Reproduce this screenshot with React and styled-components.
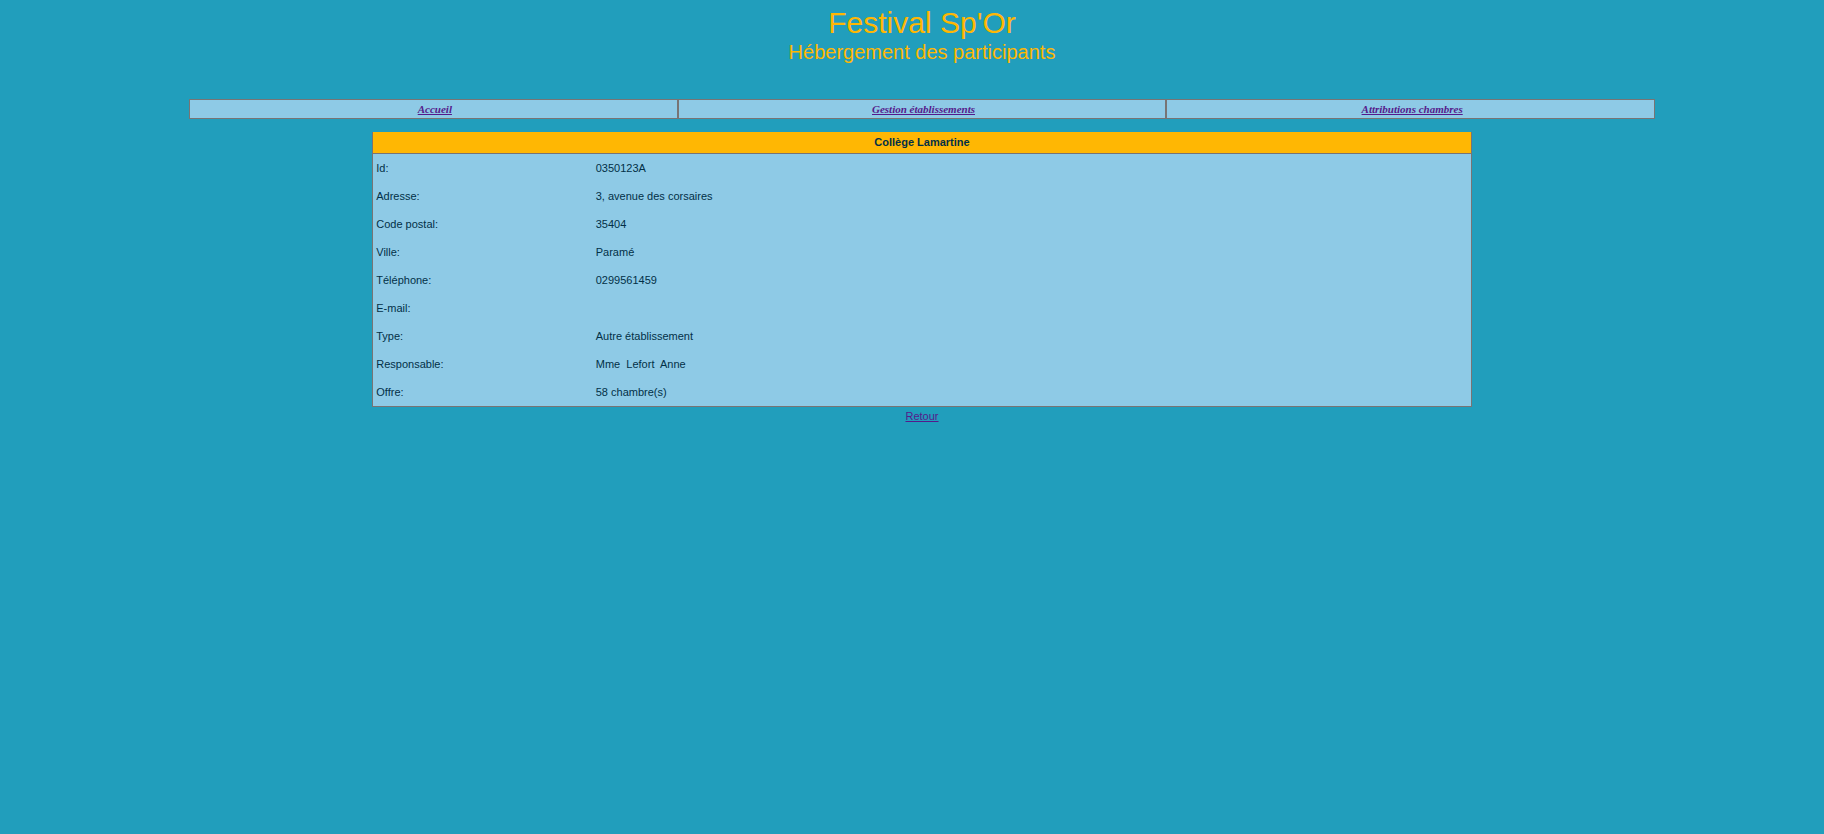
import React from 'react';
import styled, { createGlobalStyle } from 'styled-components';

const GlobalStyle = createGlobalStyle`
  body {
    margin: 0;
    background: #219ebc;
    color: #023047;
    font-family: "Liberation Sans", Arial, sans-serif;
    font-size: 11px;
    line-height: 12px;
  }
`;

const Page = styled.div`
  display: flex;
  flex-direction: column;
  align-items: center;
  padding: 5px 169px 20px 189px;
`;

const Header = styled.header`
  text-align: center;
  color: #ffb703;
  margin-bottom: 35px;
`;

const Title = styled.h1`
  margin: 0;
  font-size: 30px;
  line-height: 35px;
  font-weight: normal;
`;

const Subtitle = styled.p`
  margin: 0;
  font-size: 20px;
  line-height: 24px;
`;

const Nav = styled.nav`
  display: grid;
  grid-template-columns: repeat(3, 1fr);
  width: 100%;
  margin-bottom: 13px;
`;

const NavCell = styled.div`
  box-sizing: border-box;
  height: 20px;
  padding: 3px 0 3px 3px;
  border: 1px solid #787474;
  background: #8ecae6;
  text-align: center;
`;

const Link = styled.a`
  color: #551a8b;
  text-decoration: underline;
`;

const NavLink = styled(Link)`
  font-family: "Liberation Serif", "Times New Roman", serif;
  font-weight: bold;
  font-style: italic;
`;

const Details = styled.table`
  width: 75%;
  table-layout: fixed;
  border-collapse: separate;
  border-spacing: 0;
  border: 1px solid #787474;
  border-top: 0;
  background: #8ecae6;
`;

const Heading = styled.th`
  height: 19px;
  padding: 0 0 2px;
  border-bottom: 1px solid #787474;
  background: #ffb703;
  text-align: center;
`;

const Label = styled.th`
  height: 28px;
  padding: 0 3px;
  font-weight: normal;
  text-align: left;
`;

const Value = styled.td`
  padding: 0 3px;
  white-space: pre;
`;

const LabelColumn = styled.col`
  width: 20%;
`;

const Footer = styled.footer`
  padding-top: 3px;
`;

const links = ['Accueil', 'Gestion établissements', 'Attributions chambres'];

const fields = [
  ['Id:', '0350123A'],
  ['Adresse:', '3, avenue des corsaires'],
  ['Code postal:', '35404'],
  ['Ville:', 'Paramé'],
  ['Téléphone:', '0299561459'],
  ['E-mail:', ''],
  ['Type:', 'Autre établissement'],
  ['Responsable:', 'Mme\u00a0 Lefort\u00a0 Anne'],
  ['Offre:', '58 chambre(s)'],
];

export default function App() {
  return (
    <>
      <GlobalStyle />
      <Page>
        <Header>
          <Title>Festival Sp'Or</Title>
          <Subtitle>Hébergement des participants</Subtitle>
        </Header>
        <Nav>
          {links.map((text) => (
            <NavCell key={text}>
              <NavLink href="#">{text}</NavLink>
            </NavCell>
          ))}
        </Nav>
        <Details>
          <colgroup>
            <LabelColumn />
            <col />
          </colgroup>
          <thead>
            <tr>
              <Heading colSpan={2}>Collège Lamartine</Heading>
            </tr>
          </thead>
          <tbody>
            {fields.map(([label, value]) => (
              <tr key={label}>
                <Label scope="row">{label}</Label>
                <Value>{value}</Value>
              </tr>
            ))}
          </tbody>
        </Details>
        <Footer>
          <Link href="#">Retour</Link>
        </Footer>
      </Page>
    </>
  );
}
